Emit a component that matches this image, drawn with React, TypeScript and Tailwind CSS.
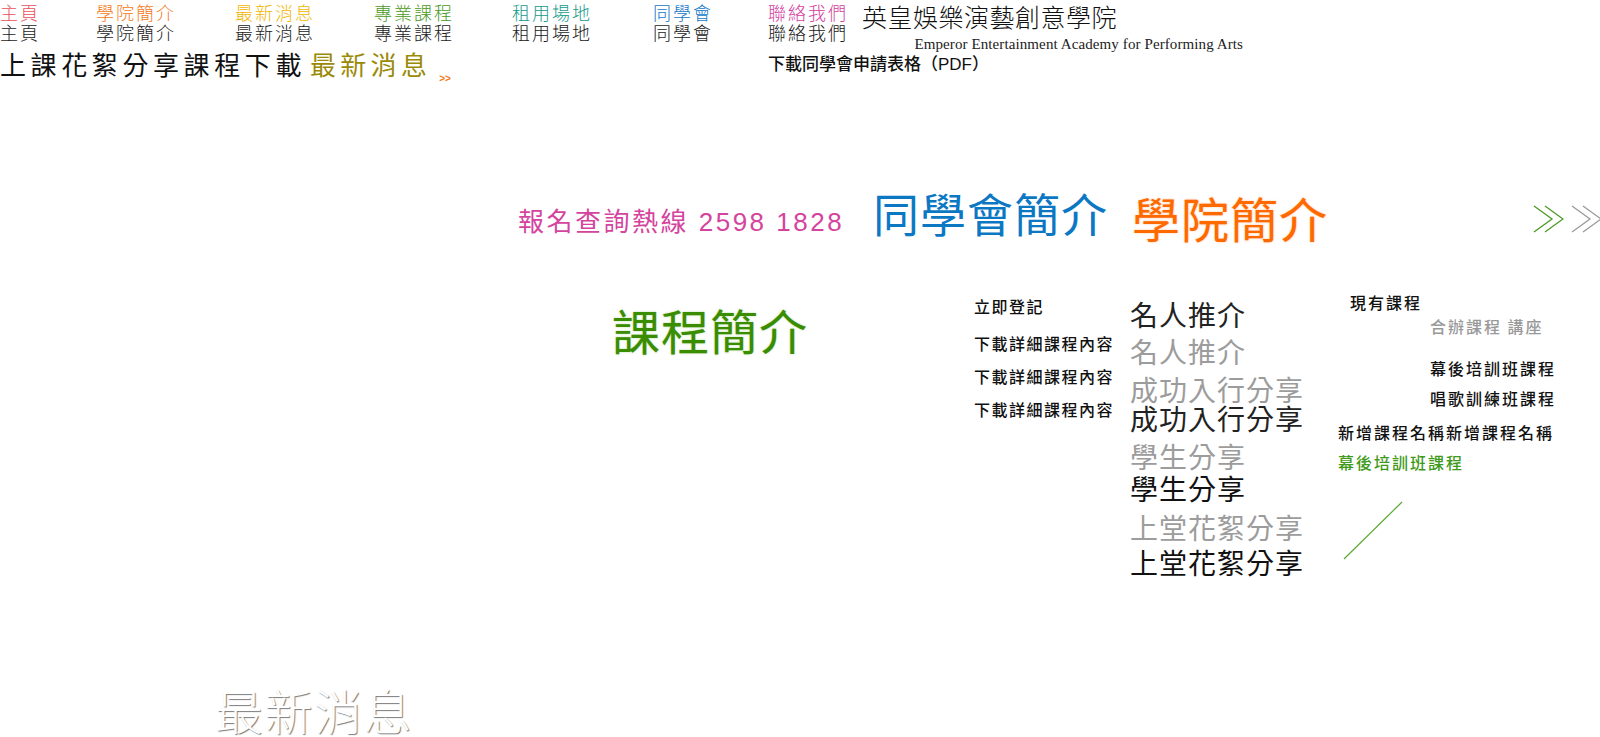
import React from "react";

const navItems: { label: string; color: string; w: string }[] = [
  { label: "主頁", color: "text-[#e8505b]", w: "w-[96px]" },
  { label: "學院簡介", color: "text-[#f47a20]", w: "w-[139px]" },
  { label: "最新消息", color: "text-[#f2b500]", w: "w-[139px]" },
  { label: "專業課程", color: "text-[#4a9a22]", w: "w-[138px]" },
  { label: "租用場地", color: "text-[#169a8c]", w: "w-[141px]" },
  { label: "同學會", color: "text-[#1478c8]", w: "w-[115px]" },
  { label: "聯絡我們", color: "text-[#d43ea0]", w: "w-[94px]" },
];

function Chevrons({ color }: { color: string }) {
  return (
    <svg width="31" height="28" viewBox="0 0 31 28" fill="none">
      <polyline points="1,1 19,14 1,27" stroke={color} strokeWidth="1.3" />
      <polyline points="12,1 30,14 12,27" stroke={color} strokeWidth="1.3" />
    </svg>
  );
}

export default function App() {
  return (
    <div className="relative w-[1600px] h-[737px] overflow-hidden bg-white font-['Noto_Sans_CJK_TC','Noto_Sans',sans-serif] text-[#111]">
      {/* top navigation: colour row over black row */}
      <nav className="flex pt-[2px]">
        {navItems.map((n) => (
          <div key={n.label} className={`${n.w} flex flex-col text-[18px] leading-[20px] tracking-[2px] font-light`}>
            <span className={n.color}>{n.label}</span>
            <span className="text-[#1a1a1a]">{n.label}</span>
          </div>
        ))}
      </nav>

      {/* logo */}
      <div className="absolute left-[862px] top-[2px] flex flex-col items-end">
        <span className="text-[25px] leading-[28px] tracking-[0.5px] font-light text-[#111]">英皇娛樂演藝創意學院</span>
        <span className="font-['Liberation_Serif',serif] text-[15px] leading-[16px] text-[#222] mt-[6px] -mr-[126px] tracking-[0.1px]">
          Emperor Entertainment Academy for Performing Arts
        </span>
      </div>

      <div className="absolute left-[768px] top-[56px] text-[17px] leading-none font-medium text-[#111] font-['Liberation_Sans','Noto_Sans_CJK_TC',sans-serif]">
        下載同學會申請表格（PDF）
      </div>

      {/* third row */}
      <div className="absolute left-0 top-[51px] flex items-end text-[26px] leading-none">
        <span className="tracking-[4.6px] text-[#111]">上課花絮分享課程下載</span>
        <span className="ml-[4px] tracking-[4.3px] text-[#9a8a08]">最新消息</span>
        <span className="ml-[8px] mb-[-7px] text-[10px] leading-none font-bold text-[#f47a20] font-['Liberation_Sans',sans-serif]">&gt;&gt;</span>
      </div>

      {/* hotline + headings */}
      <div className="absolute left-[518px] top-[209px] text-[26px] leading-none tracking-[2.5px] text-[#d4449e] font-['Liberation_Sans','Noto_Sans_CJK_TC',sans-serif]">
        報名查詢熱線 2598 1828
      </div>
      <div className="absolute left-[873px] top-[189px] text-[46px] leading-none tracking-[1px] text-[#0c78c4]">同學會簡介</div>
      <div className="absolute left-[1132px] top-[193px] text-[48px] leading-none tracking-[1px] text-[#ff6a00] [text-shadow:0_0_2px_rgba(255,140,60,0.6)]">
        學院簡介
      </div>
      <div className="absolute left-[1533px] top-[205px] flex gap-[7px]">
        <Chevrons color="#4a9a22" />
        <Chevrons color="#999999" />
      </div>

      <div className="absolute left-[612px] top-[305px] text-[48px] leading-none tracking-[1px] text-[#3a8c00] [text-shadow:0_0_2px_rgba(90,170,40,0.5)]">
        課程簡介
      </div>

      {/* download column */}
      <div className="absolute left-[974px] top-[298px] flex flex-col gap-[21px] text-[16px] leading-none tracking-[1.5px] font-medium text-[#111]">
        <span>立即登記</span>
        <span>下載詳細課程內容</span>
        <span className="-mt-[4px]">下載詳細課程內容</span>
        <span className="-mt-[4px]">下載詳細課程內容</span>
      </div>

      {/* share column */}
      <div className="absolute left-[1130px] top-[300px] flex flex-col text-[28px] leading-none tracking-[1px]">
        <span className="text-[#222]">名人推介</span>
        <span className="mt-[9px] text-[#9c9c9c]">名人推介</span>
        <span className="mt-[10px] text-[#9c9c9c]">成功入行分享</span>
        <span className="mt-[1px] text-[#222]">成功入行分享</span>
        <span className="mt-[10px] text-[#9c9c9c]">學生分享</span>
        <span className="mt-[4px] text-[#111]">學生分享</span>
        <span className="mt-[11px] text-[#9c9c9c]">上堂花絮分享</span>
        <span className="mt-[7px] text-[#111]">上堂花絮分享</span>
      </div>

      {/* course column */}
      <div className="absolute left-[1338px] top-[294px] flex flex-col text-[16px] leading-none tracking-[2px] font-medium">
        <span className="ml-[12px] text-[#111]">現有課程</span>
        <span className="ml-[92px] mt-[8px] text-[#999]">合辦課程 講座</span>
        <span className="ml-[92px] mt-[26px] text-[#111]">幕後培訓班課程</span>
        <span className="ml-[92px] mt-[14px] text-[#111]">唱歌訓練班課程</span>
        <span className="mt-[18px] text-[#111]">新增課程名稱新增課程名稱</span>
        <span className="mt-[14px] text-[#3f9a1a]">幕後培訓班課程</span>
      </div>

      <svg className="absolute left-[1340px] top-[500px]" width="66" height="62" viewBox="0 0 66 62">
        <line x1="4" y1="59" x2="62" y2="2" stroke="#5aa832" strokeWidth="1.2" />
      </svg>

      {/* ghost heading */}
      <div className="absolute left-[215px] top-[685px] text-[48px] leading-none tracking-[1.5px] font-light text-white [text-shadow:1px_1px_1px_rgba(110,110,110,0.9)]">
        最新消息
      </div>
    </div>
  );
}
